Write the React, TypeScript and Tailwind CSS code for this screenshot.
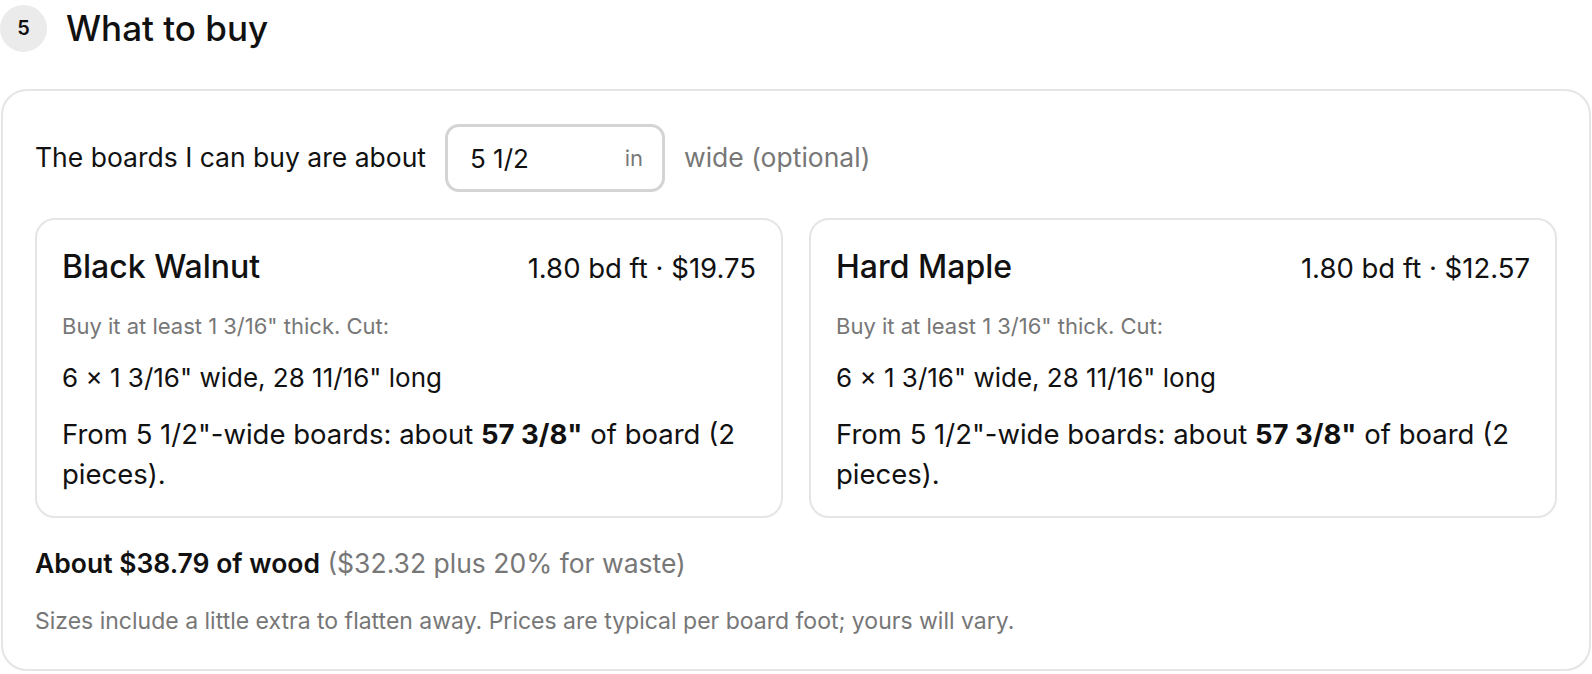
import React from "react";

interface Wood {
  name: string;
  boardFeet: string;
  price: string;
}

const woods: Wood[] = [
  { name: "Black Walnut", boardFeet: "1.80 bd ft", price: "$19.75" },
  { name: "Hard Maple", boardFeet: "1.80 bd ft", price: "$12.57" },
];

function WoodCard({ wood }: { wood: Wood }) {
  return (
    <div className="border-2 border-[#e5e5e5] rounded-[20px] px-[25px] pt-[27px] pb-[22px]">
      <div className="flex items-baseline justify-between">
        <span className="text-[32px] font-medium leading-[40px]">{wood.name}</span>
        <span className="text-[27.5px] leading-[40px]">
          {wood.boardFeet} · {wood.price}
        </span>
      </div>
      <p className="mt-[24px] text-[22px] leading-[28px] text-[#777]">Buy it at least 1 3/16" thick. Cut:</p>
      <p className="mt-[20px] text-[26px] leading-[36px]">6 × 1 3/16" wide, 28 11/16" long</p>
      <p className="mt-[18px] text-[27.5px] leading-[40px]">
        From 5 1/2"-wide boards: about <b className="font-bold">57 3/8"</b> of board (2 pieces).
      </p>
    </div>
  );
}

export default function App() {
  return (
    <div className="w-[1592px] min-h-[674px] bg-white text-[#111] font-['Inter',sans-serif]">
      {/* Step header */}
      <div className="flex items-center gap-[19px] h-[56px]">
        <div className="w-[47px] h-[47px] rounded-full bg-[#ebebeb] flex items-center justify-center text-[20px] font-semibold">
          5
        </div>
        <h2 className="text-[35px] font-medium">What to buy</h2>
      </div>

      {/* Panel */}
      <div className="mt-[33px] mx-[1px] border-2 border-[#e5e5e5] rounded-[26px] px-[32px] pt-[33px] pb-[32px]">
        <div className="flex items-center gap-[19px]">
          <span className="text-[26.5px]">The boards I can buy are about</span>
          <div className="w-[220px] h-[68px] border-[3px] border-[#d4d4d4] rounded-[14px] flex items-center justify-between pl-[22px] pr-[19px]">
            <span className="text-[26px]">5 1/2</span>
            <span className="text-[22px] text-[#777]">in</span>
          </div>
          <span className="text-[26.5px] text-[#777]">wide (optional)</span>
        </div>

        <div className="grid grid-cols-2 gap-[26px] mt-[26px]">
          {woods.map((w) => (
            <WoodCard key={w.name} wood={w} />
          ))}
        </div>

        <p className="mt-[27px] text-[26.5px] leading-[36px]">
          <span className="font-semibold">About $38.79 of wood</span>{" "}
          <span className="text-[#777]">($32.32 plus 20% for waste)</span>
        </p>
        <p className="mt-[24px] text-[23px] leading-[32px] text-[#777]">
          Sizes include a little extra to flatten away. Prices are typical per board foot; yours will vary.
        </p>
      </div>
    </div>
  );
}
